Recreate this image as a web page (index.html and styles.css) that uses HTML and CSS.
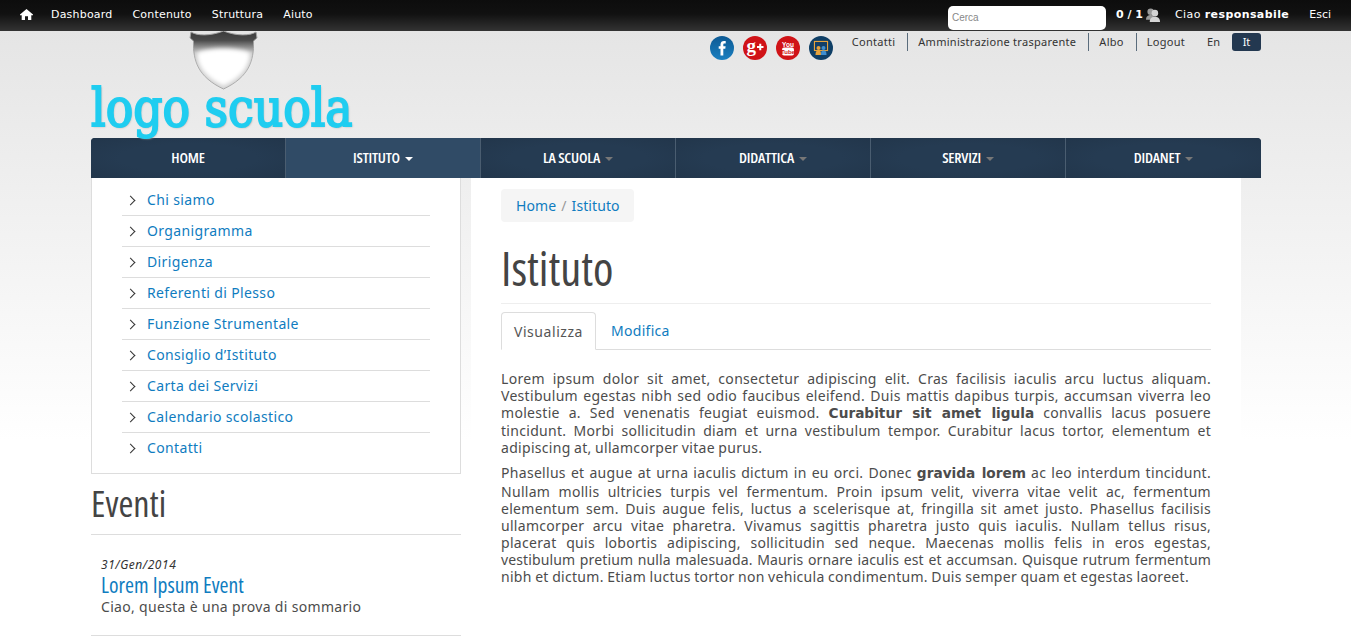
FILE: index.html
```html
<!DOCTYPE html>
<html lang="it">
<head>
<meta charset="utf-8">
<title>Istituto</title>
<link rel="stylesheet" href="styles.css">
</head>
<body>
<div class="topbar">
  <div class="topbar-left">
    <svg class="home-icon" width="13" height="11" viewBox="0 0 13 11"><path fill="#fff" d="M6.500 0 L13 5.600 L13 6.200 L11.300 6.200 L11.300 11 L8 11 L8 7.300 L5 7.300 L5 11 L1.700 11 L1.700 6.200 L0 6.200 L0 5.600 Z"/></svg>
    <a>Dashboard</a><a>Contenuto</a><a>Struttura</a><a>Aiuto</a>
  </div>
  <div class="topbar-right">
    <div class="search">Cerca</div>
    <span class="count">0 / 1</span>
    <svg class="users" width="14" height="16" viewBox="0 0 15 16"><circle cx="5" cy="4.500" r="3.500" fill="#9a9a9a"/><path d="M0 13 C0 9 3 8 5 8 C7 8 9 9 9 13 Z" fill="#9a9a9a"/><circle cx="9.500" cy="6" r="3.500" fill="#d4d4d4"/><path d="M4 15.500 C4 11 7 10 9.500 10 C12 10 15 11 15 15.500 Z" fill="#d4d4d4"/></svg>
    <span class="hello">Ciao <b>responsabile</b></span>
    <a class="logout">Esci</a>
  </div>
</div>
<div class="page">
  <header class="head">
    <div class="logo">
      <svg class="shield" width="70" height="60" viewBox="0 0 70 60">
        <defs>
          <linearGradient id="sg" x1="0" y1="0" x2="0" y2="1"><stop offset="0" stop-color="#3a3a3a"/><stop offset=".16" stop-color="#4a4a4a"/><stop offset=".38" stop-color="#c8c8c8"/><stop offset="1" stop-color="#d0d0d0"/></linearGradient>
          <filter id="soft" x="-20%" y="-20%" width="140%" height="140%"><feGaussianBlur stdDeviation="2.200"/></filter>
        </defs>
        <path fill="url(#sg)" stroke="#a0a0a0" d="M2 1 C8 5 22 5 34.500 0 C47 5 61 5 67 1 L68 7 L64.500 10 C65 30 60 46 34.500 58 C9 46 4 30 4.500 10 L1 7 Z"/>
        <path fill="#fff" filter="url(#soft)" d="M8 22 C18 16 50 16 61 22 C61 34 54 46 34.500 55 C15 46 8 34 8 22 Z"/>
      </svg>
      <div class="logo-text">logo scuola</div>
    </div>
    <div class="head-right">
      <div class="social">
        <svg width="24" height="24" viewBox="0 0 24 24"><defs><linearGradient id="fb" x1="0" y1="0" x2="0" y2="1"><stop offset="0" stop-color="#0d5a94"/><stop offset="1" stop-color="#1a7fc0"/></linearGradient></defs><circle cx="12" cy="12" r="12" fill="url(#fb)"/><path fill="#fff" d="M13.300 19.500 V12.800 H15.300 L15.600 10.200 H13.300 V8.700 C13.300 7.900 13.600 7.500 14.500 7.500 H15.700 V5.100 C15.200 5 14.700 5 14 5 C12 5 10.500 6.200 10.500 8.400 V10.200 H8.700 V12.800 H10.500 V19.500 Z"/></svg>
        <svg width="24" height="24" viewBox="0 0 24 24"><circle cx="12" cy="12" r="12" fill="#d01317"/><text x="3.500" y="15.500" class="gplus">g</text><path stroke="#fff" stroke-width="2" d="M14 11 H20.500 M17.250 7.750 V14.250"/></svg>
        <svg width="24" height="24" viewBox="0 0 24 24"><circle cx="12" cy="12" r="12" fill="#d01317"/><text x="12" y="10.500" class="yt-you">You</text><rect x="6" y="11.500" width="12" height="8" rx="2" fill="#fff"/><text x="12" y="17.500" class="yt-tube">Tube</text></svg>
        <svg width="24" height="24" viewBox="0 0 24 24"><circle cx="12" cy="12" r="12" fill="#0f3f66"/><rect x="5.500" y="5.500" width="13" height="9" fill="none" stroke="#e6a33c" stroke-width="1.200"/><rect x="6.100" y="6.100" width="11.800" height="7.800" fill="#123f66"/><circle cx="9.500" cy="12" r="2" fill="#e6a33c"/><path fill="#e6a33c" d="M6.500 19 C6.500 15 8 14.500 9.500 14.500 C11 14.500 12 15 12 19 Z"/><circle cx="14.500" cy="12" r="2" fill="#3f8fd0"/><path fill="#3f8fd0" d="M12 19 C12 15 13 14.500 14.500 14.500 C16 14.500 17.500 15 17.500 19 Z"/></svg>
      </div>
      <nav class="utility">
        <a>Contatti</a><a class="amm">Amministrazione trasparente</a><a class="albo">Albo</a><a class="out">Logout</a>
      </nav>
      <div class="lang"><a>En</a><a class="on">It</a></div>
    </div>
  </header>
  <nav class="mainnav">
    <a>HOME</a>
    <a class="active">ISTITUTO<i class="caret"></i></a>
    <a>LA SCUOLA<i class="caret"></i></a>
    <a>DIDATTICA<i class="caret"></i></a>
    <a>SERVIZI<i class="caret"></i></a>
    <a>DIDANET<i class="caret"></i></a>
  </nav>
  <div class="columns">
    <aside class="side">
      <ul class="sidemenu">
        <li><a>Chi siamo</a></li>
        <li><a>Organigramma</a></li>
        <li><a>Dirigenza</a></li>
        <li><a>Referenti di Plesso</a></li>
        <li><a>Funzione Strumentale</a></li>
        <li><a>Consiglio d’Istituto</a></li>
        <li><a>Carta dei Servizi</a></li>
        <li><a>Calendario scolastico</a></li>
        <li><a>Contatti</a></li>
      </ul>
      <h2 class="side-title">Eventi</h2>
      <div class="event">
        <div class="event-date">31/Gen/2014</div>
        <a class="event-title">Lorem Ipsum Event</a>
        <div class="event-text">Ciao, questa è una prova di sommario</div>
      </div>
    </aside>
    <main class="main">
      <div class="crumb"><a>Home</a><span>/</span><a>Istituto</a></div>
      <h1 class="title">Istituto</h1>
      <div class="tabs"><a class="tab on">Visualizza</a><a class="tab">Modifica</a></div>
      <p>Lorem ipsum dolor sit amet, consectetur adipiscing elit. Cras facilisis iaculis arcu luctus aliquam. Vestibulum egestas nibh sed odio faucibus eleifend. Duis mattis dapibus turpis, accumsan viverra leo molestie a. Sed venenatis feugiat euismod. <b>Curabitur sit amet ligula</b> convallis lacus posuere tincidunt. Morbi sollicitudin diam et urna vestibulum tempor. Curabitur lacus tortor, elementum et adipiscing at, ullamcorper vitae purus.</p>
      <p>Phasellus et augue at urna iaculis dictum in eu orci. Donec <b>gravida lorem</b> ac leo interdum tincidunt. Nullam mollis ultricies turpis vel fermentum. Proin ipsum velit, viverra vitae velit ac, fermentum elementum sem. Duis augue felis, luctus a scelerisque at, fringilla sit amet justo. Phasellus facilisis ullamcorper arcu vitae pharetra. Vivamus sagittis pharetra justo quis iaculis. Nullam tellus risus, <span class="nobreak">placerat quis</span> lobortis adipiscing, sollicitudin sed neque. Maecenas mollis felis in eros egestas, <span class="tight">vestibulum pretium nulla malesuada. Mauris ornare iaculis est et accumsan. Quisque rutrum fermentum</span> nibh et dictum. Etiam luctus tortor non vehicula condimentum. Duis semper quam et egestas laoreet.</p>
    </main>
  </div>
</div>
</body>
</html>
```
FILE: styles.css
```css
* { box-sizing: border-box; }
html, body { height: 638px; overflow: hidden; }
body {
  margin: 0;
  font-family: "Noto Sans", sans-serif;
  font-size: 14px;
  line-height: 14px;
  color: #4c4c4c;
  background: linear-gradient(#e5e5e5 30px, #fff 440px);
}
a { color: #0f7cc0; }
.topbar {
  height: 31px;
  background: linear-gradient(#0d0d0d 0, #111 45%, #333 100%);
  display: flex;
  justify-content: space-between;
  font-family: "DejaVu Sans", sans-serif;
  font-size: 11px;
  color: #fff;
}
.topbar a { color: #fff; }
.topbar-left { display: flex; align-items: center; padding: 0 0 2px 20px; }
.home-icon { margin-right: 18px; }
.topbar-left a { margin-right: 20px; letter-spacing: .2px; }
.topbar-right { display: flex; align-items: center; padding-right: 20px; }
.search {
  align-self: flex-start;
  width: 158px; height: 24px; margin: 6px 10px 0 0;
  background: #fff; border-radius: 5px;
  font: 10px/24px "Liberation Sans", sans-serif; color: #888; padding-left: 4px;
}
.count { font-weight: bold; margin-bottom: 2px; }
.users { margin: 0 15px 2px 3px; }
.hello { margin: 0 20px 2px 0; letter-spacing: .41px; }
.logout { margin-bottom: 2px; }
.page { width: 1170px; margin: 0 0 0 91px; }
.head { height: 107px; display: flex; justify-content: space-between; }
.logo { position: relative; width: 270px; }
.shield { position: absolute; left: 98px; top: 0; }
.logo-text {
  position: absolute; left: 0; top: 44px;
  font-family: "DejaVu Serif", serif;
  font-size: 52px;
  line-height: 66px;
  color: #1fcdf0;
  -webkit-text-stroke: 2px #1fcdf0;
  transform: scaleX(.88);
  transform-origin: left center;
  text-shadow: 1px 1px 2px #aaa;
  white-space: nowrap;
}
.head-right { display: flex; align-items: flex-start; padding-top: 2px; }
.social { display: flex; gap: 9px; margin: 3px 8px 0 0; }
.social svg { display: block; }
.gplus { font: bold 19px "Liberation Serif", serif; fill: #fff; }
.yt-you { font: bold 6.500px "Liberation Sans", sans-serif; fill: #fff; text-anchor: middle; }
.yt-tube { font: bold 6px "Liberation Sans", sans-serif; fill: #d01317; text-anchor: middle; }
.utility { display: flex; font-size: 11px; line-height: 18px; letter-spacing: .28px; color: #333; }
.utility a { color: #333; padding: 0 12px 0 11px; border-right: 1px solid #5a6c7c; }
.utility a.amm, .utility a.albo, .utility a.out { padding-left: 10px; }
.utility a.out { border-right: 0; padding-right: 11px; }
.lang { display: flex; font-size: 11px; line-height: 18px; }
.lang a { color: #333; padding: 0 11px; }
.lang a.on { width: 29px; padding: 0; text-align: center; background: #233850; color: #fff; border-radius: 3px; margin-left: 1px; }
.mainnav { display: flex; height: 40px; border-radius: 4px 4px 0 0; overflow: hidden; background: #233850; }
.mainnav a {
  width: 195px; text-align: center; color: #fff;
  font-family: "Open Sans", sans-serif;
  font-stretch: 75%;
  font-weight: 600;
  font-size: 15px;
  letter-spacing: -.2px;
  line-height: 38px;
  background: radial-gradient(ellipse at center, #253b52 50%, #22364b 100%);
  border-right: 1px solid #4a5d70;
}
.mainnav a:last-child { border-right: 0; }
.mainnav a.active { background: #304b66; }
.caret { display: inline-block; margin-left: 5px; vertical-align: 2px; border: 4px solid transparent; border-top-color: #777; border-bottom: 0; }
.active .caret { border-top-color: #fff; }
.columns { display: flex; align-items: flex-start; }
.side { width: 370px; }
.sidemenu { list-style: none; margin: 0; padding: 7px 30px 10px; height: 296px; border: 1px solid #ddd; border-top: 0; background: #fff; }
.sidemenu li { height: 31px; line-height: 30px; border-bottom: 1px solid #ddd; padding-left: 25px; position: relative; letter-spacing: .36px; }
.sidemenu li:last-child { border-bottom: 0; }
.sidemenu li::before { content: ""; position: absolute; left: 5px; top: 12px; width: 6px; height: 6px; border: solid #333; border-width: 1.600px 1.600px 0 0; transform: rotate(45deg); }
.side-title { margin: 0; height: 61px; border-bottom: 1px solid #ddd; font-family: "Open Sans", sans-serif; font-stretch: 75%; font-weight: 400; font-size: 36px; line-height: 60px; color: #444; }
.event { padding: 22px 10px 12px; height: 101px; border-bottom: 1px solid #ddd; }
.event-date { font-style: italic; font-size: 12px; line-height: 16px; color: #333; letter-spacing: .55px; }
.event-title { display: block; font-family: "Open Sans", sans-serif; font-stretch: 75%; font-size: 21.700px; line-height: 24px; padding-bottom: 2px; color: #0f7cc0; }
.event-text { line-height: 16px; letter-spacing: .32px; }
.main { width: 770px; margin-left: 10px; padding: 11px 30px 0; background: #fff; height: 420px; }
.crumb { display: inline-flex; gap: 5px; height: 33px; line-height: 33px; padding: 0 14px 0 15px; background: #f5f5f5; border-radius: 4px; color: #999; letter-spacing: .1px; }
.title { margin: 24px 0 0; height: 58px; border-bottom: 1px solid #eee; font-family: "Open Sans", sans-serif; font-stretch: 75%; font-weight: 400; font-size: 46.500px; line-height: 44px; color: #444; }
.tabs { display: flex; margin-top: 8px; height: 38px; border-bottom: 1px solid #ddd; }
.tab { padding: 0 15px; line-height: 37px; height: 38px; letter-spacing: .3px; }
.tab.on { border: 1px solid #ddd; border-bottom-color: #fff; border-radius: 4px 4px 0 0; color: #555; padding: 0 12px; letter-spacing: .55px; }
p { margin: 0 0 8px; text-align: justify; line-height: 17.1px; font-size: 14px; letter-spacing: .3px; word-spacing: -.5px; }
p b { font-family: "DejaVu Sans", sans-serif; font-size: 13.7px; letter-spacing: 0; word-spacing: 0; }
.nobreak { white-space: nowrap; }
.tight { letter-spacing: .12px; }
.tabs + p { margin-top: 20px; }
```
